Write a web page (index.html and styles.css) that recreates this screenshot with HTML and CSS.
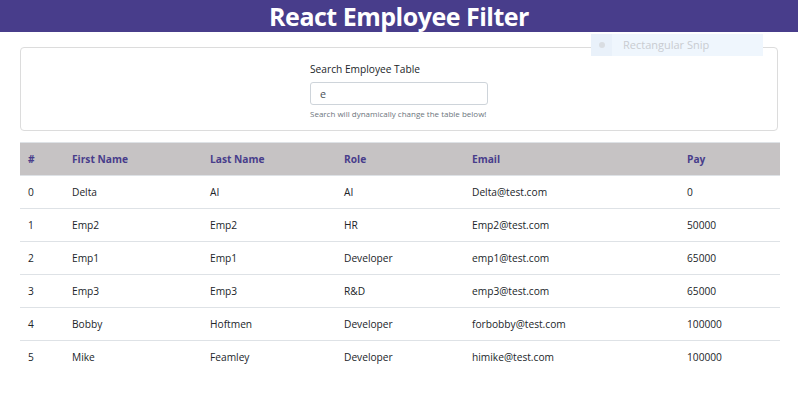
FILE: index.html
```html
<!DOCTYPE html>
<html>
<head>
<meta charset="utf-8">
<link rel="stylesheet" href="styles.css">
</head>
<body>
<header class="topbar"><h1 class="title">React Employee Filter</h1></header>
<div class="snip"><span class="snip-icon"><span class="dot"></span></span><span class="snip-text">Rectangular Snip</span></div>
<main class="page">
  <section class="card">
    <label class="label" for="q">Search Employee Table</label>
    <input id="q" class="search" type="text" value="e">
    <small class="help">Search will dynamically change the table below!</small>
  </section>
  <table class="tbl">
    <thead>
      <tr><th class="c1">#</th><th class="c2">First Name</th><th class="c3">Last Name</th><th class="c4">Role</th><th class="c5">Email</th><th class="c6">Pay</th></tr>
    </thead>
    <tbody>
      <tr><td>0</td><td>Delta</td><td>AI</td><td>AI</td><td>Delta@test.com</td><td>0</td></tr>
      <tr><td>1</td><td>Emp2</td><td>Emp2</td><td>HR</td><td>Emp2@test.com</td><td>50000</td></tr>
      <tr><td>2</td><td>Emp1</td><td>Emp1</td><td>Developer</td><td>emp1@test.com</td><td>65000</td></tr>
      <tr><td>3</td><td>Emp3</td><td>Emp3</td><td>R&amp;D</td><td>emp3@test.com</td><td>65000</td></tr>
      <tr><td>4</td><td>Bobby</td><td>Hoftmen</td><td>Developer</td><td>forbobby@test.com</td><td>100000</td></tr>
      <tr><td>5</td><td>Mike</td><td>Feamley</td><td>Developer</td><td>himike@test.com</td><td>100000</td></tr>
    </tbody>
  </table>
</main>
</body>
</html>
```

FILE: styles.css
```css
* { box-sizing: border-box; }
html, body { margin: 0; padding: 0; background: #fff; }
body { font-family: "Open Sans", "Noto Sans", sans-serif; color: #212529; font-size: 10.2px; line-height: 16px; }
.topbar { background: #483d8b; height: 32px; display: flex; justify-content: center; align-items: center; }
.title { margin: 0; color: #fff; font-size: 25px; font-weight: 700; line-height: 32px; letter-spacing: -0.5px; }
.snip { position: absolute; left: 591px; top: 34px; width: 172px; height: 22px; background: #eff6fd; display: flex; align-items: center; }
.snip-icon { width: 21px; height: 22px; background: #e9f1fa; display: flex; align-items: center; justify-content: center; }
.dot { width: 6px; height: 6px; border-radius: 50%; background: #d9dde2; }
.snip-text { margin-left: 11px; color: #c9ccd1; font-size: 11px; }
.page { padding: 15px 20px 0; }
.card { border: 1px solid #dcdcdc; border-radius: 4px; height: 84px; display: flex; flex-direction: column; align-items: center; padding-top: 13px; }
.label { color: #212529; font-size: 10.2px; line-height: 16px; width: 178px; }
.search { margin-top: 5px; width: 178px; height: 23px; border: 1px solid #ced4da; border-radius: 3px; padding: 0 9px; font-family: inherit; font-size: 10.7px; color: #495057; outline: none; }
.help { margin-top: 3px; width: 178px; font-size: 8px; line-height: 12px; color: #6c757d; white-space: nowrap; }
.tbl { margin-top: 11px; width: 760px; border-collapse: collapse; table-layout: fixed; }
.tbl th { background: #c6c3c4; color: #483d8b; font-weight: 700; text-align: left; padding: 8px 8px; height: 33px; border-top: 1px solid #dee2e6; }
.tbl td { padding: 8px 8px; height: 33px; border-top: 1px solid #dee2e6; text-align: left; }
.c1 { width: 44px; }
.c2 { width: 138px; }
.c3 { width: 134px; }
.c4 { width: 128px; }
.c5 { width: 215px; }
.c6 { width: 101px; }
```
